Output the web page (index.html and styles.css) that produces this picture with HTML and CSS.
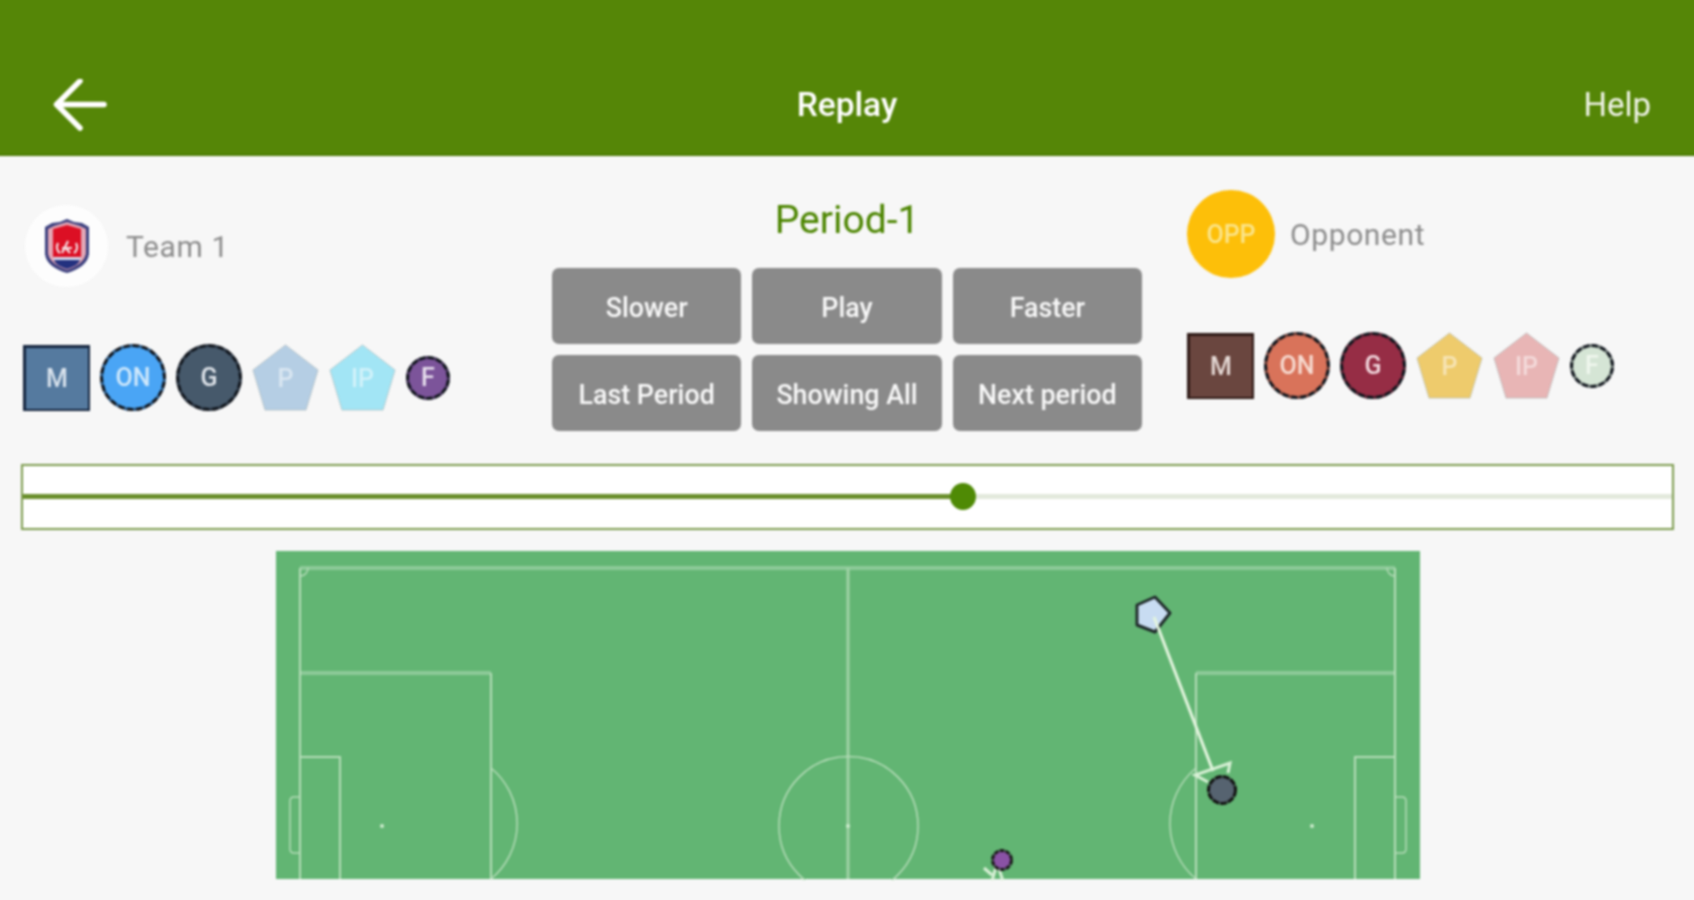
FILE: index.html
```html
<!DOCTYPE html>
<html lang="en">
<head>
<meta charset="utf-8">
<title>Replay</title>
<link rel="stylesheet" href="styles.css">
</head>
<body>
<div class="app">
  <header class="topbar">
    <svg class="back" viewBox="0 0 54 52" aria-hidden="true"><path d="M51 25.500H4M27 2L3.500 25.500L27 49"/></svg>
    <h1 class="title">Replay</h1>
    <span class="help">Help</span>
  </header>

  <section class="panel">
    <div class="team team-home">
      <div class="identity identity-home">
        <div class="logo">
          <svg viewBox="0 0 46 54" class="shield" aria-hidden="true">
            <path class="s-edge" d="M23 0L30 3L38 4L45 8V34C45 44 34 51 23 54C12 51 1 44 1 34V8L8 4L16 3Z"/>
            <path class="s-pink" d="M23 3L36 7L42 10V33C42 42 32 48 23 51C14 48 4 42 4 33V10L10 7Z"/>
            <path class="s-red" d="M23 6L37 10V38H9V10Z"/>
            <path class="s-white" d="M9 38H37L36 41H10Z"/>
            <path class="s-blue" d="M10 41H36C34 46 29 48 23 50C17 48 12 46 10 41Z"/>
            <path class="s-glyph" d="M14 24C12 28 13 32 16 34M32 24C34 28 33 32 30 34M18 29H28M24 22L21 28L26 34M21 28L18 34"/>
          </svg>
        </div>
        <span class="team-name">Team 1</span>
      </div>
      <div class="badges">
        <span class="badge square m-home">M</span>
        <span class="badge round on-home">ON</span>
        <span class="badge round g-home">G</span>
        <svg class="pent" viewBox="0 0 67 67"><polygon class="p-home" points="33.500,1 66,26 54,66 13,66 1,26"/><text x="33.500" y="43">P</text></svg>
        <svg class="pent" viewBox="0 0 67 67"><polygon class="ip-home" points="33.500,1 66,26 54,66 13,66 1,26"/><text x="33.500" y="43">IP</text></svg>
        <span class="badge small f-home">F</span>
      </div>
    </div>

    <div class="controls">
      <h2 class="period">Period-1</h2>
      <div class="buttons">
        <button class="btn">Slower</button>
        <button class="btn">Play</button>
        <button class="btn">Faster</button>
        <button class="btn">Last Period</button>
        <button class="btn">Showing All</button>
        <button class="btn">Next period</button>
      </div>
    </div>

    <div class="team team-away">
      <div class="identity identity-away">
        <div class="opp">OPP</div>
        <span class="team-name">Opponent</span>
      </div>
      <div class="badges">
        <span class="badge square m-away">M</span>
        <span class="badge round on-away">ON</span>
        <span class="badge round g-away">G</span>
        <svg class="pent" viewBox="0 0 67 67"><polygon class="p-away" points="33.500,1 66,26 54,66 13,66 1,26"/><text x="33.500" y="43">P</text></svg>
        <svg class="pent" viewBox="0 0 67 67"><polygon class="ip-away" points="33.500,1 66,26 54,66 13,66 1,26"/><text x="33.500" y="43">IP</text></svg>
        <span class="badge small f-away">F</span>
      </div>
    </div>
  </section>

  <div class="slider">
    <div class="track">
      <div class="fill" style="width:57%"><span class="thumb"></span></div>
    </div>
  </div>

  <svg class="pitch" viewBox="276 551 1144 329" aria-label="Pitch">
    <rect class="grass" x="276" y="551" width="1144" height="328"/>
    <g class="lines">
      <path class="thick" d="M300 568H1395M300 673H491M1196 673H1395"/>
      <path d="M300 568V879M1395 568V879M491 673V879M1196 673V879"/>
      <path class="mid" d="M848 568V879"/>
      <path d="M300 757H340V879M1395 757H1355V879"/>
      <path class="thin" d="M300 797H294Q290 797 290 801V849Q290 853 294 853H300M1395 797H1402Q1406 797 1406 801V849Q1406 853 1402 853H1395"/>
      <circle class="thin" cx="848.500" cy="826" r="69.500"/>
      <path class="thin" d="M491 768A72 72 0 0 1 491 879M1196 768A72 72 0 0 0 1170 826A72 72 0 0 0 1196 879"/>
      <path class="thin" d="M300 576A8 8 0 0 0 308 568M1395 576A8 8 0 0 1 1387 568"/>
    </g>
    <g class="spots">
      <circle cx="382" cy="826" r="2"/>
      <circle cx="848" cy="826" r="2"/>
      <circle cx="1312" cy="826" r="2"/>
    </g>
    <polygon class="mk-p" points="1155,597 1170,613 1155,632 1137,625 1137,605"/>
    <path class="pass" d="M1154 617L1213 771"/>
    <path class="pass-head" d="M1208 782L1195 775L1230 763L1228 773"/>
    <circle class="mk-g" cx="1222" cy="790" r="13.500"/>
    <path class="pass-head" d="M992 881L996 867M984 868L992 875M1003 881L999 869"/>
    <circle class="mk-f" cx="1002" cy="860" r="9.500"/>
  </svg>
</div>
</body>
</html>
```
FILE: styles.css
```css
* { box-sizing: border-box; }
html, body { margin: 0; height: 100%; }
body {
  background: #f7f7f7;
  font-family: Roboto, "Liberation Sans", sans-serif;
  overflow: hidden;
}
.app { height: 900px; filter: blur(0.8px); }

.topbar {
  height: 161px;
  margin: -5px -5px 0;
  padding: 84px 48px 0;
  background: #558607;
  border-bottom: 2px solid #4d7c04;
  color: #fff;
  display: grid;
  grid-template-columns: 1fr auto 1fr;
  align-items: center;
  align-content: start;
}
.back { width: 54px; height: 52px; margin-left: 10px; }
.back path { fill: none; stroke: #fff; stroke-width: 5.500; stroke-linecap: round; stroke-linejoin: round; }
.title { margin: 0; font-size: 33.500px; font-weight: 500; line-height: 52px; }
.help { justify-self: end; font-size: 33px; line-height: 52px; color: #f0f4e8; }

.panel {
  display: grid;
  grid-template-columns: 484px 590px 484px;
  column-gap: 45px;
  padding: 0 23px;
}
.identity { display: flex; align-items: center; }
.identity-home { margin: 49px 0 57px 2px; gap: 18px; }
.identity-away { margin: 34px 0 54px; gap: 15px; }
.logo {
  width: 83px; height: 82px;
  border-radius: 50%;
  background: #fdfdfd;
  display: flex; align-items: center; justify-content: center;
}
.shield { width: 46px; height: 54px; }
.s-edge { fill: #3a3f7e; }
.s-pink { fill: #e3a7b5; }
.s-red { fill: #dc0f24; }
.s-blue { fill: #23317f; }
.s-white { fill: #d5d9ea; }
.s-glyph { fill: none; stroke: #f5dfe2; stroke-width: 2.200; }
.team-name { font-size: 30px; color: #8c8c8c; letter-spacing: 0.6px; }
.opp {
  width: 88px; height: 88px;
  border-radius: 50%;
  background: #fdbf09;
  color: #fbe58c;
  font-size: 25px;
  font-weight: 500;
  display: flex; align-items: center; justify-content: center;
}

.badges { display: flex; align-items: center; gap: 10px; }
.badge {
  display: flex; align-items: center; justify-content: center;
  font-size: 25px;
  font-weight: 500;
  flex: none;
}
.square { width: 67px; height: 66px; border: 2px solid #16263f; border-width: 3px 2px 2px 3px; }
.round, .small {
  border-radius: 50%;
  border: 3px dashed #0c1218;
  outline: 3px solid rgba(20, 24, 32, .55);
  outline-offset: -3px;
}
.round { width: 66px; height: 67px; }
.small { width: 44px; height: 44px; }
.pent { width: 67px; height: 67px; flex: none; overflow: visible; }
.pent text { font-size: 25px; font-weight: 500; text-anchor: middle; font-family: Roboto, sans-serif; fill: #fff; fill-opacity: .5; }
.pent polygon { stroke: #9aa8a8; stroke-opacity: .5; stroke-width: 1; }

.m-home { background: #557a9f; color: #d8e2ec; }
.on-home { background: #4aa5f5; color: #cfe8fb; }
.g-home { background: #46596b; color: #dfe4ea; }
.p-home { fill: #b5cee4; }
.ip-home { fill: #a2e5f5; }
.f-home { background: #7c549a; color: #e8e0ee; }
.m-away { background: #6a463f; color: #e5d9d5; border-color: #2e1a16; }
.on-away { background: #d9735a; color: #f7dcd2; }
.g-away { background: #962d45; color: #f2d8de; }
.p-away { fill: #eecb6c; }
.ip-away { fill: #e8b5b5; }
.f-away { background: #d5e5d5; color: #f0f7ee; }

.controls { padding-top: 34px; }
.period {
  margin: 0 0 18px;
  font-size: 39px;
  font-weight: 400;
  line-height: 60px;
  text-align: center;
  color: #4c8500;
}
.buttons {
  display: grid;
  grid-template-columns: repeat(3, 1fr);
  grid-auto-rows: 76px;
  gap: 11px;
}
.btn {
  border: 0;
  padding: 4px 0 0;
  border-radius: 7px;
  background: #8a8a8a;
  color: #f8f8f8;
  font: 500 26.800px Roboto, sans-serif;
}

.slider {
  margin: 33px 20px 0 21px;
  height: 66px;
  padding-bottom: 2px;
  border: 2px solid #7c9b4e;
  background: #fff;
  display: flex;
  align-items: center;
}
.track { flex: 1; height: 5px; background: #e3e9dc; }
.fill { height: 100%; background: #6a8f2c; position: relative; }
.thumb {
  position: absolute;
  right: -13px; top: -11px;
  width: 26px; height: 27px;
  border-radius: 50%;
  background: #4f8a05;
}

.pitch { display: block; width: 1144px; height: 329px; margin: 21px 0 0 276px; }
.grass { fill: #62b573; }
.lines { fill: none; stroke: #b5dcb8; stroke-width: 2; }
.lines .thick { stroke: #8dca98; stroke-width: 4; }
.lines .mid { stroke: #a0d2a6; stroke-width: 3; }
.lines .thin { stroke-width: 1.500; }
.spots { fill: #cfeccf; }
.mk-p { fill: #c8dcf2; stroke: #1f2a2a; stroke-width: 3; stroke-linejoin: round; }
.pass { stroke: #e4f5df; stroke-width: 3; fill: none; }
.pass-head { stroke: #d8f0d6; stroke-width: 3; fill: none; }
.mk-g { fill: #566370; stroke: #111; stroke-width: 3; stroke-dasharray: 7 1; }
.mk-f { fill: #8a52a5; stroke: #1a1a1a; stroke-width: 3; stroke-dasharray: 5 1; }
```
